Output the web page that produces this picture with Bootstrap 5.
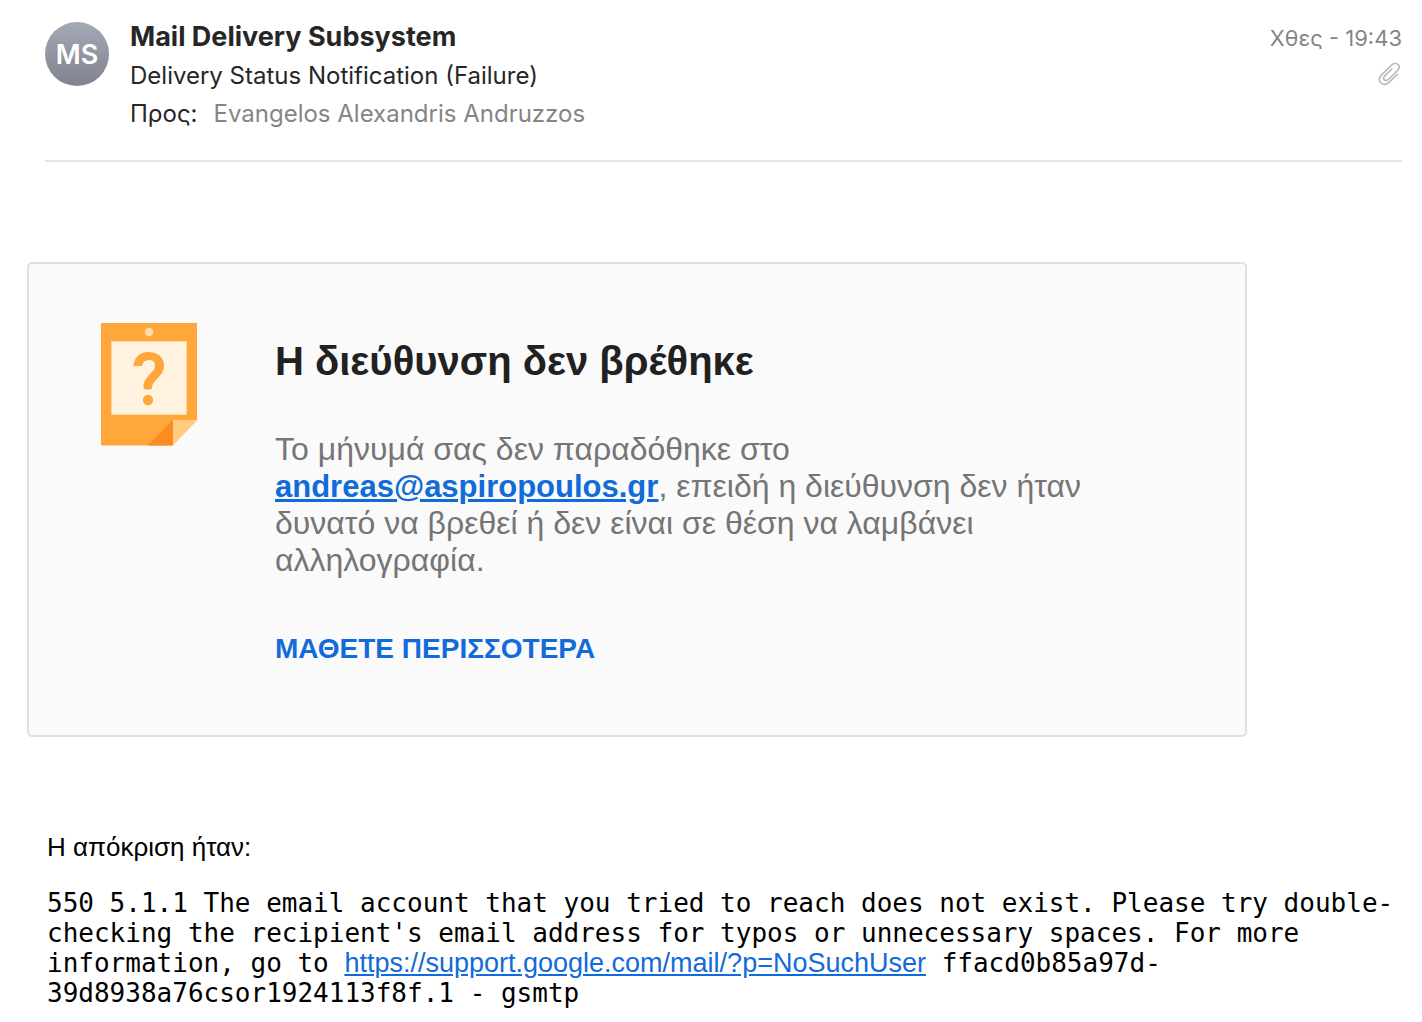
<!DOCTYPE html>
<html lang="el">
<head>
<meta charset="utf-8">
<meta name="viewport" content="width=device-width, initial-scale=1">
<title>Delivery Status Notification (Failure)</title>
<link rel="stylesheet" href="https://cdn.jsdelivr.net/npm/bootstrap@5.3.0/dist/css/bootstrap.min.css">
<style>
  body { font-family: "Liberation Sans", Arial, sans-serif; color: #000; background: #fff; }
  a { color: #116bd8; }
  .mail-head { font-family: Inter, sans-serif; margin: 0 20px 0 45px; padding: 17px 0 27px; border-bottom: 2px solid #e5e5e5; color: #262626; font-size: 24px; line-height: 38px; }
  .avatar { width: 64px; height: 64px; margin: 5px 21px 0 0; background: linear-gradient(#a4a9b6, #80838d); font-size: 27px; font-weight: 600; padding-top: 2px; }
  .sender { font-size: 27px; line-height: 40px; font-weight: 700; }
  .soft { color: #858585; }
  .stamp { font-size: 22px; line-height: 38px; padding-top: 2px; }
  .clip { margin: 4px 1px 0 0; }
  .notice { max-width: 1220px; margin: 100px 20px 0 27px; padding: 59px 72px 66px; background: #fafafa; border: 2px solid #e0e0e0; border-radius: 5px; gap: 78px; }
  .notice-body { max-width: 830px; }
  .notice h1 { font-size: 40px; line-height: 48px; font-weight: 700; color: #212121; margin: 14px 0 46px; }
  .notice p { font-size: 32px; line-height: 37px; color: #757575; margin-bottom: 50px; }
  .notice p a { font-size: 31px; }
  .more { font-size: 28px; line-height: 40px; }
  .reply { margin: 94px 20px 0 47px; font-size: 26px; line-height: 30px; }
  .reply p { margin-bottom: 25px; line-height: 32px; }
  .smtp { font-family: "DejaVu Sans Mono", monospace; }
  .smtp a { font-family: "Liberation Sans", Arial, sans-serif; font-size: 27px; line-height: 24px; }
</style>
</head>
<body>
<header class="mail-head d-flex align-items-start">
  <div class="avatar rounded-circle flex-shrink-0 d-flex align-items-center justify-content-center text-white">MS</div>
  <div class="flex-grow-1">
    <div class="sender">Mail Delivery Subsystem</div>
    <div>Delivery Status Notification (Failure)</div>
    <div class="d-flex gap-3"><span>Προς:</span><span class="soft">Evangelos Alexandris Andruzzos</span></div>
  </div>
  <div class="stamp soft d-flex flex-column align-items-end">
    <time>Χθες - 19:43</time>
    <svg class="clip" width="24" height="26" viewBox="0 0 24 26" fill="none" stroke="#b9b9b9" stroke-width="1.6" stroke-linecap="round" aria-label="Συνημμένο"><path d="M20.500 13.200 12.900 20.600C10 23.400 6.400 24 4 22C1.600 19.800 2 16.500 4.600 13.900L14.300 4.300C16.500 2.200 19.500 2 21.100 3.500C22.700 5.100 22.300 7.600 20.400 9.500L11.700 18.200C10.200 19.700 8.400 19.900 7.300 18.900C6.200 17.900 6.500 16.200 7.800 14.900L14.800 8"/></svg>
  </div>
</header>
<main>
  <section class="notice d-flex align-items-start">
    <svg class="flex-shrink-0" width="96" height="123" viewBox="0 0 96 123" aria-hidden="true">
      <path fill="#ffa73a" d="M0 0h96v97l-25 25.500H0z"/>
      <path fill="#fb8c24" d="M72 97v25.500H46.500z"/>
      <path fill="#ffcc80" d="M72 97h24.500L72 122.500z"/>
      <path fill="#fff3e0" stroke="#ffd699" d="M10.500 18.500h75v73h-75z"/>
      <circle cx="48" cy="9" r="4.200" fill="#ffdcae"/>
      <path fill="#ffa73a" d="M32.500 43C33 34.500 39 29 47.500 29C57 29 63 34.500 63 42.500C63 48 60.500 51.500 56 56C52.500 59.500 51 61.500 51 64.500Q51 66.500 49 66.500H44.500Q42.500 66.500 42.500 64.500C42.500 59 44 56 48.500 51.500C52 48 54 46 54 42.500C54 38.800 51.500 37 47.700 37C44 37 41.800 39 41 43z"/>
      <circle cx="47" cy="77" r="5.200" fill="#ffa73a"/>
    </svg>
    <div class="notice-body">
      <h1>Η διεύθυνση δεν βρέθηκε</h1>
      <p>Το μήνυμά σας δεν παραδόθηκε στο <a class="fw-bold" href="mailto:andreas@aspiropoulos.gr">andreas@aspiropoulos.gr</a>, επειδή η διεύθυνση δεν ήταν δυνατό να βρεθεί ή δεν είναι σε θέση να λαμβάνει αλληλογραφία.</p>
      <a class="more fw-bold text-decoration-none d-inline-block" href="#">ΜΑΘΕΤΕ ΠΕΡΙΣΣΟΤΕΡΑ</a>
    </div>
  </section>
  <section class="reply">
    <p>Η απόκριση ήταν:</p>
    <div class="smtp">550 5.1.1 The email account that you tried to reach does not exist. Please try double-checking the recipient's email address for typos or unnecessary spaces. For more information, go to <a href="https://support.google.com/mail/?p=NoSuchUser">https://support.google.com/mail/?p=NoSuchUser</a> ffacd0b85a97d-39d8938a76csor1924113f8f.1 - gsmtp</div>
  </section>
</main>
<script src="https://cdn.jsdelivr.net/npm/bootstrap@5.3.0/dist/js/bootstrap.bundle.min.js"></script>
</body>
</html>
